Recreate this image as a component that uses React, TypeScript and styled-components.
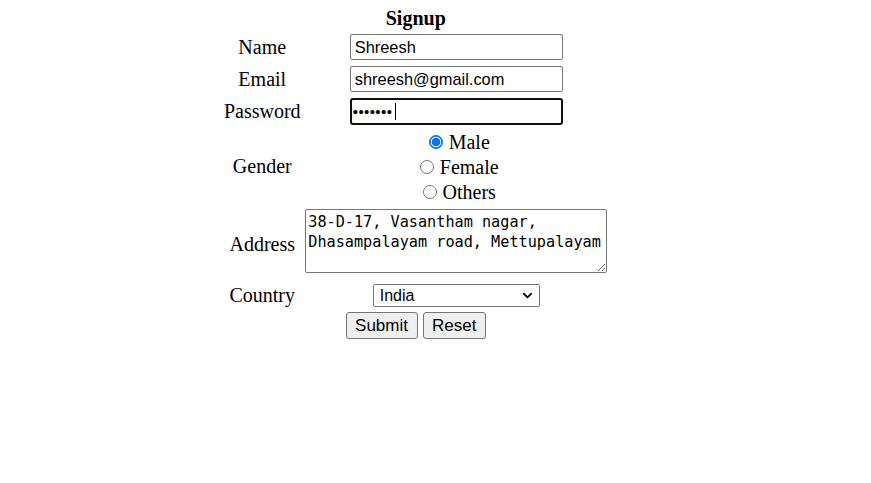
import React from "react";
import styled, { createGlobalStyle } from "styled-components";
import { ChevronDown } from "lucide-react";

const GlobalStyle = createGlobalStyle`
    body {
        margin: 8px;
        background: #ffffff;
        color: #000000;
        font-family: "Liberation Serif", "Times New Roman", serif;
        font-size: 20px;
    }
`;

const Table = styled.table`
    margin-left: 25%;
    border-collapse: collapse;
    border-spacing: 0;
`;

const Caption = styled.caption`
    font-weight: 700;
    font-size: 20px;
    line-height: 20px;
    padding-bottom: 3px;
`;

const Row = styled.tr<{ $h: number }>`
    height: ${(p) => p.$h}px;
`;

const LabelCell = styled.td`
    width: 81px;
    padding: 0;
    text-align: center;
    vertical-align: middle;
    line-height: 23px;
`;

const FieldCell = styled.td<{ $top?: number }>`
    width: 307px;
    padding: ${(p) => (p.$top !== undefined ? `${p.$top}px 0 0` : "0")};
    text-align: center;
    vertical-align: ${(p) => (p.$top !== undefined ? "top" : "middle")};
`;

const TextInput = styled.input`
    display: block;
    box-sizing: border-box;
    width: 213px;
    height: 26px;
    margin: 0 auto;
    padding: 1px 4px;
    border: 1px solid #767676;
    border-radius: 2px;
    background: #ffffff;
    color: #000000;
    font-family: "Liberation Sans", Arial, sans-serif;
    font-size: 16.4px;
    outline: none;
`;

const PasswordWrap = styled.span`
    position: relative;
    display: block;
    width: 213px;
    margin: 0 auto;
`;

const PasswordInput = styled(TextInput)`
    height: 27px;
    padding: 1px 1px;
    border: 2px solid #101010;
    border-radius: 3px;
    font-size: 15px;
    letter-spacing: 0.4px;
`;

const Caret = styled.span`
    position: absolute;
    left: 45px;
    top: 5px;
    width: 1px;
    height: 17px;
    background: #000000;
`;

const RadioLine = styled.div`
    line-height: 25px;
    height: 25px;
    white-space: nowrap;
`;

const Radio = styled.input`
    appearance: none;
    -webkit-appearance: none;
    box-sizing: border-box;
    width: 14px;
    height: 14px;
    margin: 0 1px 0 6px;
    border: 1px solid #767676;
    border-radius: 50%;
    background: #ffffff;
    vertical-align: 0;

    &:checked {
        border-color: #0075ff;
        background: radial-gradient(circle, #0075ff 0 4px, #ffffff 4.6px 5px, #0075ff 5.6px);
    }
`;

const AddressBox = styled.textarea`
    display: block;
    box-sizing: border-box;
    width: 302px;
    height: 64px;
    margin: 0 auto;
    padding: 2px;
    border: 1px solid #767676;
    border-radius: 2px;
    color: #000000;
    font-family: "DejaVu Sans Mono", "Liberation Mono", monospace;
    font-size: 15.2px;
    line-height: 20px;
    text-align: left;
    outline: none;
`;

const SelectWrap = styled.span`
    position: relative;
    display: block;
    width: 167px;
    margin: 0 auto;
`;

const CountrySelect = styled.select`
    appearance: none;
    -webkit-appearance: none;
    display: block;
    box-sizing: border-box;
    width: 167px;
    height: 23px;
    margin: 0;
    padding: 0 6px;
    border: 1px solid #767676;
    border-radius: 2px;
    background: #ffffff;
    color: #000000;
    font-family: "Liberation Sans", Arial, sans-serif;
    font-size: 16px;
`;

const Arrow = styled(ChevronDown)`
    position: absolute;
    right: 5px;
    top: 4px;
    pointer-events: none;
`;

const Actions = styled.div`
    display: flex;
    justify-content: center;
    gap: 5px;
`;

const Button = styled.button`
    box-sizing: border-box;
    height: 27px;
    padding: 0 8.5px;
    border: 1px solid #767676;
    border-radius: 3px;
    background: #efefef;
    color: #000000;
    font-family: "Liberation Sans", Arial, sans-serif;
    font-size: 17px;
`;

const App: React.FC = () => {
    return (
        <>
            <GlobalStyle />
            <form onSubmit={(e) => e.preventDefault()}>
                <Table>
                    <Caption>Signup</Caption>
                    <tbody>
                        <Row $h={32}>
                            <LabelCell>Name</LabelCell>
                            <FieldCell>
                                <TextInput type="text" defaultValue="Shreesh" />
                            </FieldCell>
                        </Row>
                        <Row $h={32}>
                            <LabelCell>Email</LabelCell>
                            <FieldCell>
                                <TextInput type="email" defaultValue="shreesh@gmail.com" />
                            </FieldCell>
                        </Row>
                        <Row $h={32}>
                            <LabelCell>Password</LabelCell>
                            <FieldCell>
                                <PasswordWrap>
                                    <PasswordInput type="password" defaultValue="shreesh" />
                                    <Caret />
                                </PasswordWrap>
                            </FieldCell>
                        </Row>
                        <Row $h={79}>
                            <LabelCell>Gender</LabelCell>
                            <FieldCell $top={3}>
                                <RadioLine>
                                    <Radio type="radio" name="gender" defaultChecked /> Male
                                </RadioLine>
                                <RadioLine>
                                    <Radio type="radio" name="gender" /> Female
                                </RadioLine>
                                <RadioLine>
                                    <Radio type="radio" name="gender" /> Others
                                </RadioLine>
                            </FieldCell>
                        </Row>
                        <Row $h={76}>
                            <LabelCell>Address</LabelCell>
                            <FieldCell $top={3}>
                                <AddressBox defaultValue="38-D-17, Vasantham nagar, Dhasampalayam road, Mettupalayam" />
                            </FieldCell>
                        </Row>
                        <Row $h={27}>
                            <LabelCell>Country</LabelCell>
                            <FieldCell>
                                <SelectWrap>
                                    <CountrySelect defaultValue="India">
                                        <option>India</option>
                                        <option>USA</option>
                                        <option>UK</option>
                                    </CountrySelect>
                                    <Arrow size={15} strokeWidth={3} color="#000000" />
                                </SelectWrap>
                            </FieldCell>
                        </Row>
                        <Row $h={33}>
                            <FieldCell colSpan={2}>
                                <Actions>
                                    <Button type="submit">Submit</Button>
                                    <Button type="reset">Reset</Button>
                                </Actions>
                            </FieldCell>
                        </Row>
                    </tbody>
                </Table>
            </form>
        </>
    );
};

export default App;
